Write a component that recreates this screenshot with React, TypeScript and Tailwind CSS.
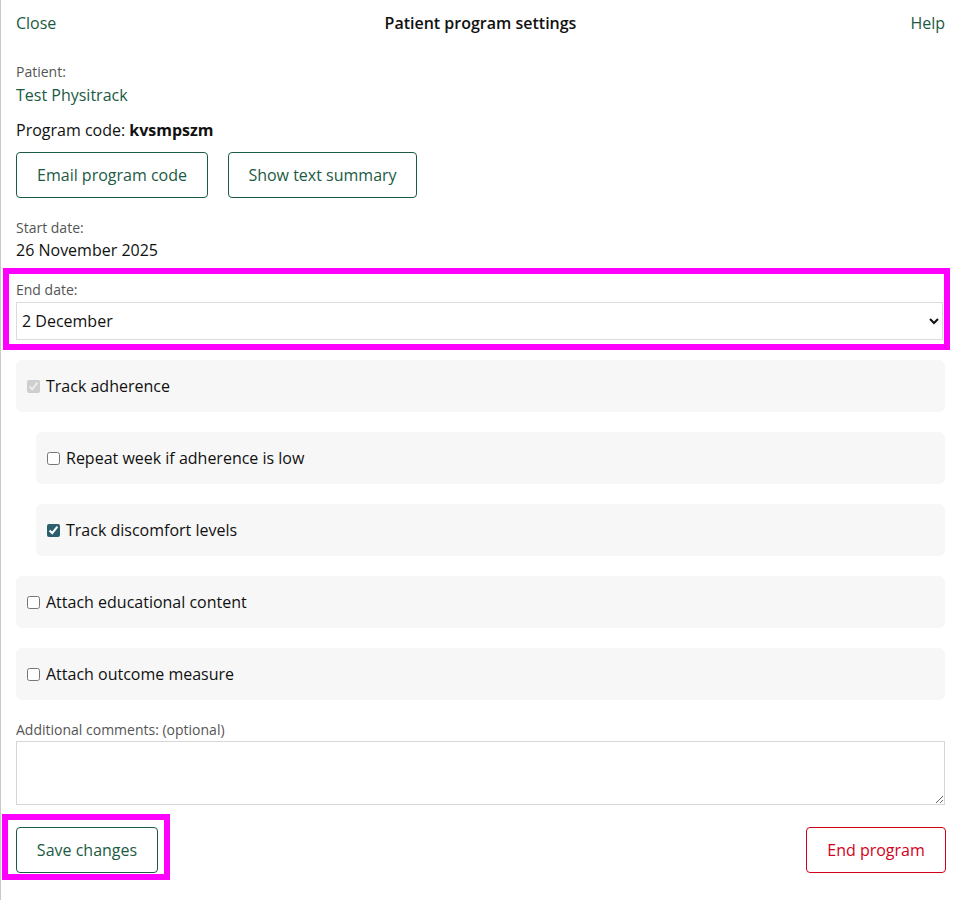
import React, { useState } from 'react';

const GREEN = 'text-[#1b5a43]';

// Grey rounded row holding a native checkbox and its label
const OptionRow: React.FC<{
  label: string;
  checked?: boolean;
  disabled?: boolean;
  nested?: boolean;
}> = ({ label, checked = false, disabled = false, nested = false }) => {
  const [on, setOn] = useState(checked);
  return (
    <label
      className={`flex h-[52px] items-center gap-[6px] rounded-[6px] bg-[#f7f7f7] px-[11px] text-[16px] text-[#111] ${nested ? 'ml-[20px]' : ''}`}
    >
      <input
        type="checkbox"
        checked={on}
        disabled={disabled}
        onChange={() => setOn(!on)}
        className="m-0 h-[13px] w-[13px] accent-[#2b5f6c]"
      />
      <span>{label}</span>
    </label>
  );
};

export default function App() {
  const [endDate, setEndDate] = useState('2 December');

  return (
    <div
      className="min-h-[900px] border-l border-[#c9c9c9] bg-white pl-[15px] pr-[15px] text-[#111]"
      style={{ fontFamily: '"Open Sans", "Noto Sans", Arial, sans-serif' }}
    >
      {/* Header */}
      <div className="grid h-[46px] grid-cols-3 items-center text-[16px]">
        <button className={`justify-self-start ${GREEN}`}>Close</button>
        <div className="text-center font-semibold">Patient program settings</div>
        <button className={`justify-self-end ${GREEN}`}>Help</button>
      </div>

      {/* Patient */}
      <div className="mt-[17px] text-[14px] leading-[18px] text-[#555]">Patient:</div>
      <div className={`mt-[3px] text-[16px] leading-[22px] ${GREEN}`}>Test Physitrack</div>

      <div className="mt-[13px] text-[16px] leading-[22px]">
        Program code: <span className="font-bold">kvsmpszm</span>
      </div>

      <div className="mt-[11px] flex gap-[20px]">
        <button className={`h-[46px] w-[192px] rounded-[4px] border border-[#1b5a43] text-[16px] ${GREEN}`}>
          Email program code
        </button>
        <button className={`h-[46px] w-[189px] rounded-[4px] border border-[#1b5a43] text-[16px] ${GREEN}`}>
          Show text summary
        </button>
      </div>

      {/* Dates */}
      <div className="mt-[21px] text-[14px] leading-[18px] text-[#555]">Start date:</div>
      <div className="mt-[2px] text-[16px] leading-[22px]">26 November 2025</div>

      {/* Highlighted end date */}
      <div className="ml-[-13px] mr-[-5px] mt-[7px] border-[6px] border-[#ff00ff] pb-[4px] pl-[7px] pr-[1px] pt-[7px]">
        <div className="text-[14px] leading-[18px] text-[#555]">End date:</div>
        <select
          value={endDate}
          onChange={(e) => setEndDate(e.target.value)}
          className="mt-[3px] h-[38px] w-full border border-[#dcdcdc] bg-white pl-[1px] pr-[2px] text-[16px] text-[#111]"
        >
          <option>2 December</option>
          <option>9 December</option>
          <option>16 December</option>
        </select>
      </div>

      {/* Options */}
      <div className="mt-[10px] flex flex-col gap-[20px]">
        <OptionRow label="Track adherence" checked disabled />
        <OptionRow label="Repeat week if adherence is low" nested />
        <OptionRow label="Track discomfort levels" checked nested />
        <OptionRow label="Attach educational content" />
        <OptionRow label="Attach outcome measure" />
      </div>

      {/* Comments */}
      <div className="mt-[21px] text-[14px] leading-[18px] text-[#555]">Additional comments: (optional)</div>
      <textarea className="mt-[2px] block h-[64px] w-full border border-[#d6d6d6] bg-white" />

      {/* Footer actions */}
      <div className="mt-[9px] flex items-start justify-between">
        <div className="ml-[-14px] border-[6px] border-[#ff00ff] pb-[1px] pl-[8px] pr-[6px] pt-[7px]">
          <button className={`h-[46px] w-[142px] rounded-[4px] border border-[#1b5a43] text-[16px] ${GREEN}`}>
            Save changes
          </button>
        </div>
        <button className="mr-[-1px] mt-[13px] h-[46px] w-[140px] rounded-[4px] border border-[#d0021b] text-[16px] text-[#d0021b]">
          End program
        </button>
      </div>
    </div>
  );
}
